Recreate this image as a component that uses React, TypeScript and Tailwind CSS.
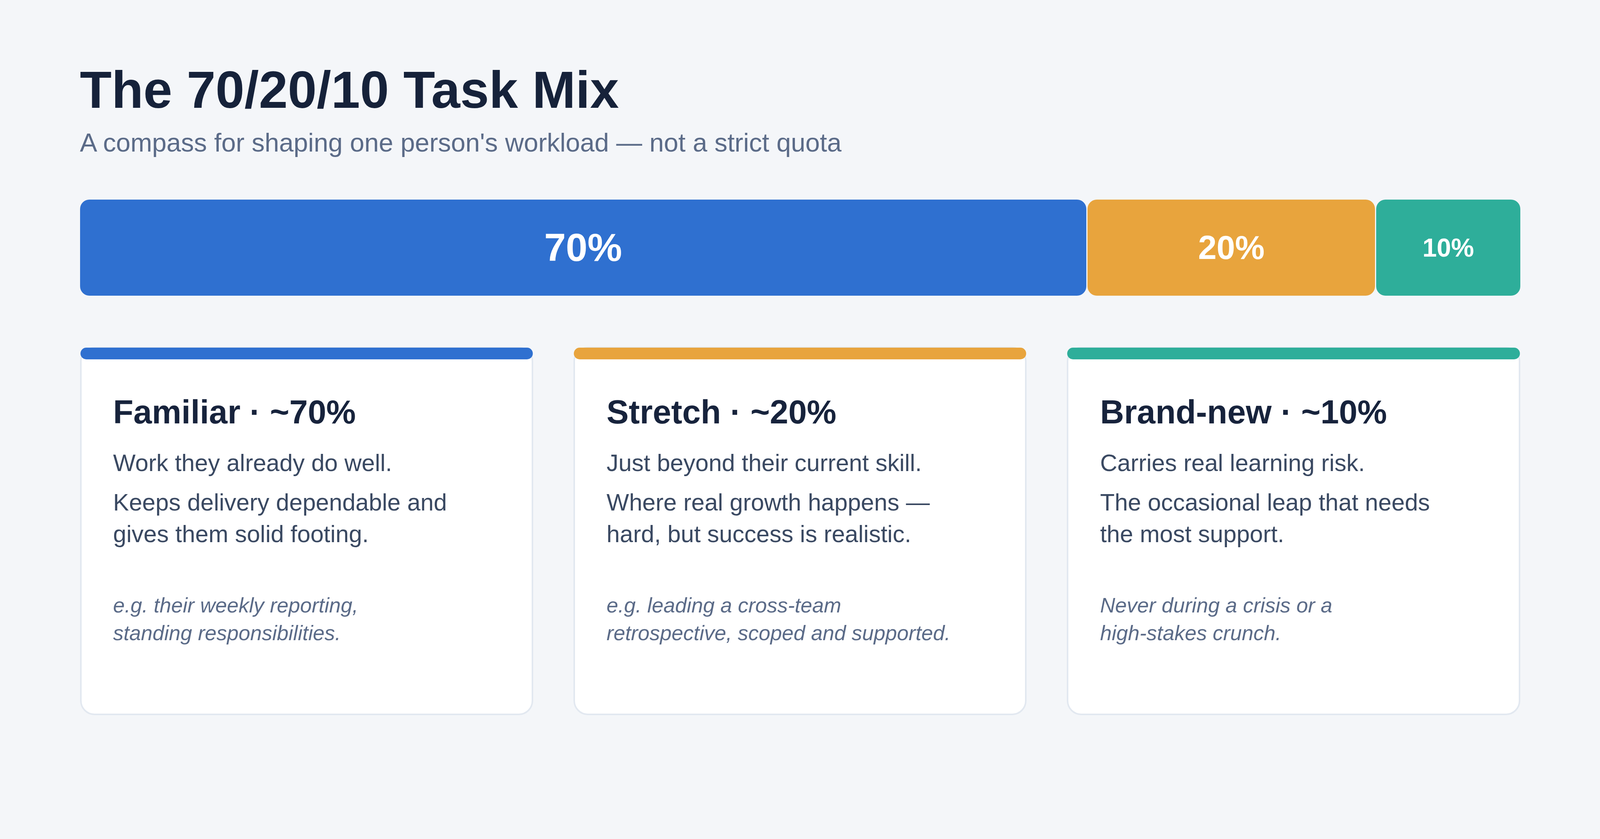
const SEGMENTS = [
  { label: '70%', grow: 'grow-[70]', bg: 'bg-[#2f70d0]', text: 'text-[99.5px]' },
  { label: '20%', grow: 'grow-[20]', bg: 'bg-[#e8a43d]', text: 'text-[85px]' },
  { label: '10%', grow: 'grow-[10]', bg: 'bg-[#2eae9a]', text: 'text-[66px]' },
]

const CARDS = [
  {
    title: 'Familiar · ~70%',
    accent: 'bg-[#2f70d0]',
    lead: 'Work they already do well.',
    body: ['Keeps delivery dependable and', 'gives them solid footing.'],
    example: ['e.g. their weekly reporting,', 'standing responsibilities.'],
  },
  {
    title: 'Stretch · ~20%',
    accent: 'bg-[#e8a43d]',
    lead: 'Just beyond their current skill.',
    body: ['Where real growth happens —', 'hard, but success is realistic.'],
    example: ['e.g. leading a cross-team', 'retrospective, scoped and supported.'],
  },
  {
    title: 'Brand-new · ~10%',
    accent: 'bg-[#2eae9a]',
    lead: 'Carries real learning risk.',
    body: ['The occasional leap that needs', 'the most support.'],
    example: ['Never during a crisis or a', 'high-stakes crunch.'],
  },
]

function Card({ card }: { card: (typeof CARDS)[number] }) {
  return (
    <div className="relative rounded-[37px] border-[4.5px] border-[#e2e8f0] bg-white px-[81px] pt-[112px] pb-[171px]">
      {/* accent strip sits over the top border */}
      <div className={`absolute -top-[2px] -left-[3px] -right-[3px] h-[30px] rounded-full ${card.accent}`} />
      <h2 className="text-[85px] font-bold leading-[101px] text-[#17233c]">{card.title}</h2>
      <p className="mt-[40px] text-[61px] leading-[81px] text-[#3a4962]">{card.lead}</p>
      <p className="mt-[20px] text-[61px] leading-[81px] text-[#3a4962]">
        {card.body[0]}
        <br />
        {card.body[1]}
      </p>
      <p className="mt-[106px] text-[53.5px] italic leading-[71px] text-[#5b6b88]">
        {card.example[0]}
        <br />
        {card.example[1]}
      </p>
    </div>
  )
}

export default function App() {
  return (
    <div
      className="min-h-screen w-full bg-[#f4f6f9]"
      style={{ fontFamily: '"Liberation Sans", Arial, Helvetica, sans-serif' }}
    >
      <div className="mx-auto w-[3687px] pt-[158px] pb-[144px]">
        <h1 className="text-[133px] font-bold leading-[145px] text-[#16223a]">The 70/20/10 Task Mix</h1>
        <p className="mt-[19px] text-[66.5px] leading-[87px] text-[#5b6b88]">
          A compass for shaping one person's workload — not a strict quota
        </p>

        <div className="mt-[102px] flex h-[246px] gap-[3px]">
          {SEGMENTS.map((s) => (
            <div
              key={s.label}
              className={`flex basis-0 items-center justify-center rounded-[24px] font-bold text-white ${s.grow} ${s.bg} ${s.text}`}
            >
              {s.label}
            </div>
          ))}
        </div>

        <div className="mt-[131px] grid grid-cols-3 gap-[103px]">
          {CARDS.map((c) => (
            <Card key={c.title} card={c} />
          ))}
        </div>
      </div>
    </div>
  )
}
